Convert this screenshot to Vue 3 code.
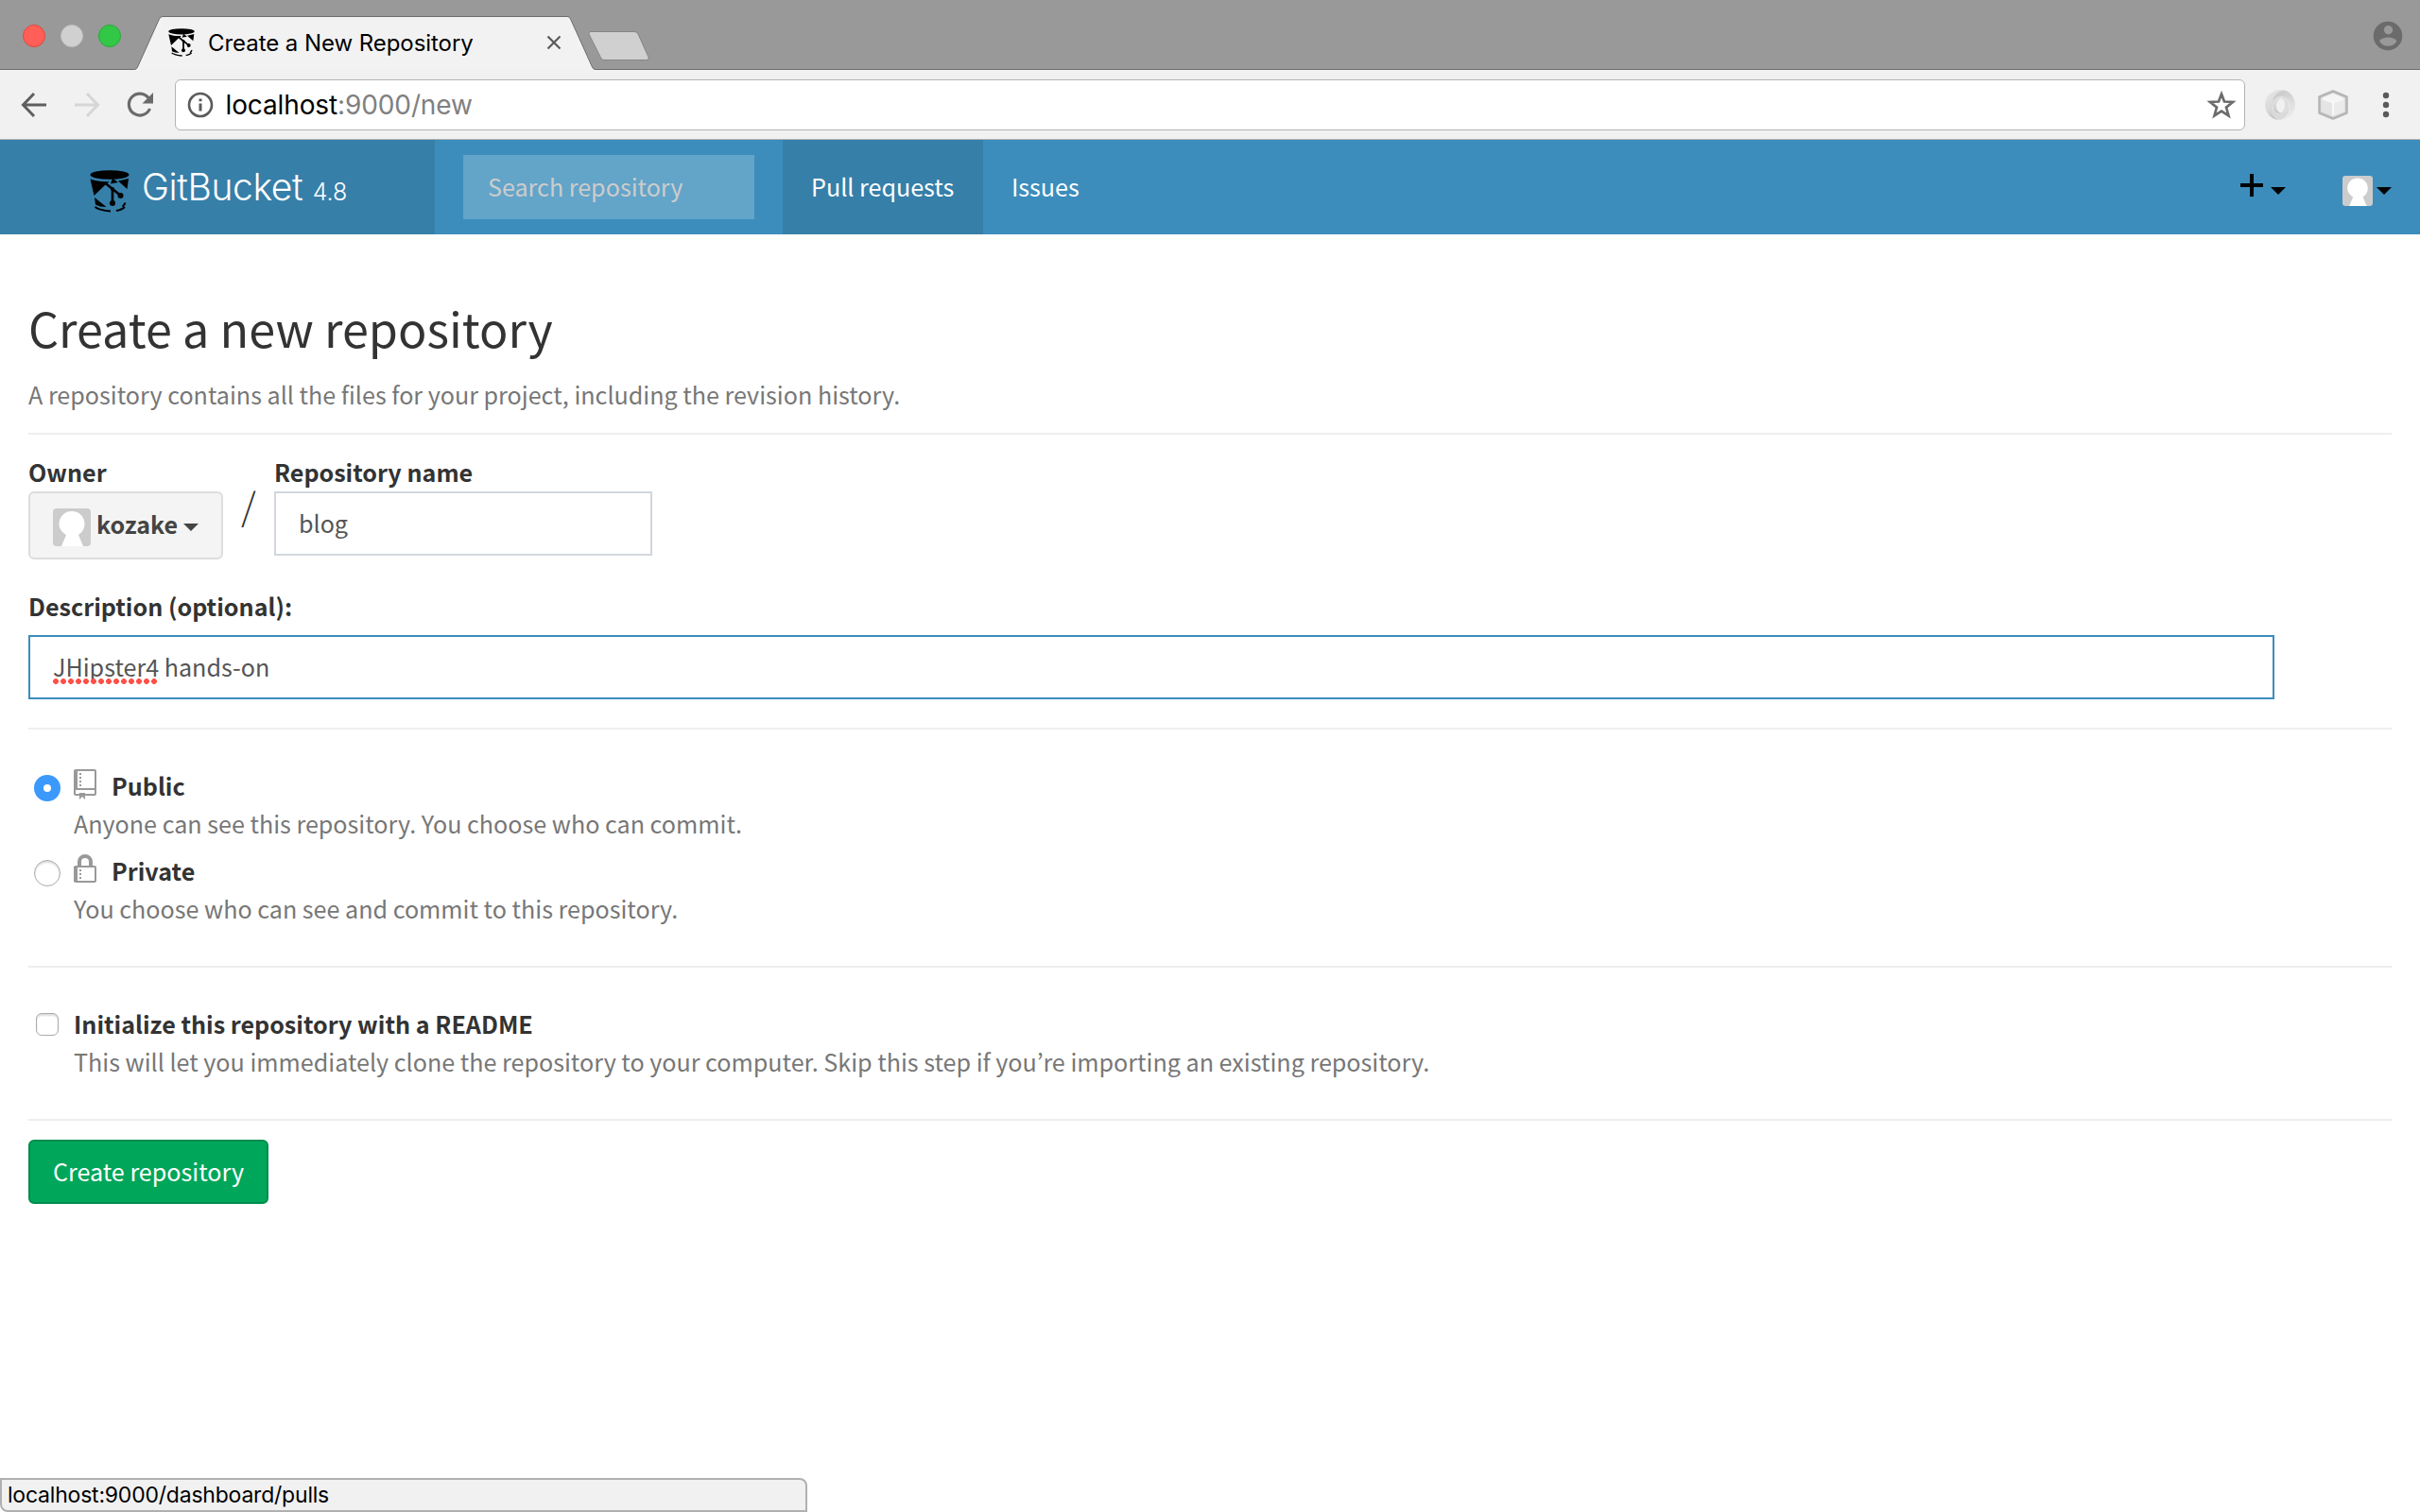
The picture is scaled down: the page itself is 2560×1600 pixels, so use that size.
<script setup>
const radios = [
  { name: 'Public', note: 'Anyone can see this repository. You choose who can commit.', on: true },
  { name: 'Private', note: 'You choose who can see and commit to this repository.', on: false },
]
</script>

<template>
  <div class="window">
    <header class="strip">
      <svg class="strip-art" width="700" height="74" viewBox="0 0 700 74">
        <circle cx="36" cy="38" r="11.5" fill="#ff5f57" stroke="#e2463f" />
        <circle cx="76" cy="38" r="11.5" fill="#d0d0d0" stroke="#c0c0c0" />
        <circle cx="116" cy="38" r="11.5" fill="#33c748" stroke="#27aa35" />
        <path d="M0 73.5H142Q144.500 73.500 145.500 71L168.500 20Q170 17.500 172 17.500H600Q602.500 17.500 603.500 20L626.500 71Q627.500 73.500 630 73.500H700V76H0Z" fill="#f2f2f2" stroke="#6d6d6d" />
        <path d="M625 33.500H671Q674 33.500 675 36L686 60.500Q687 63.500 684 63.500H639Q636.500 63.500 635.500 61L623 36Q622 33.500 625 33.500Z" fill="#d0d0d0" stroke="#858585" />
      </svg>
      <div class="tab">
        <svg class="favicon" width="28" height="30" viewBox="0 0 42 45"><use href="#bucket" /></svg>
        <span class="tab-title">Create a New Repository</span>
        <svg class="close" width="16" height="16" viewBox="0 0 16 16"><path d="M1.500 1.500 14.500 14.500M14.500 1.500 1.500 14.500" stroke="#5a5a5a" stroke-width="2.200" fill="none" /></svg>
      </div>
      <svg class="profile" width="32" height="32" viewBox="0 0 32 32">
        <circle cx="16" cy="16" r="15.300" fill="#6b6b6b" /><circle cx="16.500" cy="9.800" r="4.700" fill="#999" />
        <path d="M7 21.500C9 18.500 13 17.500 16.300 17.500S23.500 18.500 25.600 21.500C23.500 25 20 26.800 16.300 26.800S9 25 7 21.500Z" fill="#999" />
      </svg>
    </header>

    <div class="toolbar">
      <svg width="144" height="32" viewBox="0 0 144 32" fill="none" stroke-width="3">
        <path d="M27 16H3M14 4 2.500 16 14 28" stroke="#5f5f5f" />
        <path d="M57 16H81M70 4 81.500 16 70 28" stroke="#d6d6d6" />
        <path d="M135 8.500A11.500 11.500 0 1 0 136.500 20" stroke="#6b6b6b" stroke-width="3.200" />
        <path d="M140 3V14.500H128.500Z" fill="#6b6b6b" />
      </svg>
      <div class="omnibox">
        <svg width="28" height="28" viewBox="0 0 28 28"><circle cx="14" cy="14" r="12" fill="none" stroke="#5a5a5a" stroke-width="2.600" /><path d="M14 12.500V20.500M14 7.500V10.300" stroke="#5a5a5a" stroke-width="3" /></svg>
        <span class="url">localhost<span class="muted">:9000/new</span></span>
        <svg class="star" width="32" height="32" viewBox="0 0 32 32"><path d="M16 4.500 19 12.500 28 13 21 18.600 23.500 27.500 16 22.600 8.500 27.500 11 18.600 4 13 13 12.500Z" fill="none" stroke="#6b6b6b" stroke-width="2.700" /></svg>
      </div>
      <div class="extensions">
        <svg width="32" height="32" viewBox="0 0 32 32">
          <defs>
            <linearGradient id="ring-left" x1="0" y1="0" x2="0.6" y2="1"><stop stop-color="#e9e9e9" /><stop offset=".6" stop-color="#d8d8d8" /><stop offset="1" stop-color="#bcbcbc" /></linearGradient>
            <linearGradient id="ring-right" x1="0.2" y1="0" x2="0.6" y2="1"><stop stop-color="#c6c6c6" /><stop offset=".5" stop-color="#dadada" /><stop offset="1" stop-color="#ececec" /></linearGradient>
          </defs>
          <path d="M18 0C7 0 0 7 0 16C0 24 6 31 14 32C8 28 6 22 8 17C10 11 14 8 20 8C15 9 12 12 12 17C12 22 15 25 20 25C14 27 8 24 8 17Z" fill="url(#ring-left)" />
          <path d="M8 17C8 11 13 7 19 8C25 9 27 15 24 21C22 25 17 26 14 24C17 26 21 22 21 16C21 11 18 8 15 9C10 10 8 13 8 17Z" fill="#dedede" />
          <path d="M18 0C27 1 32 8 32 16C32 25 25 32 15 32C20 31 25 27 26 20C27 14 25 9 19 7.500C13 6.500 9 10 8 15C8 9 11 4 16 2C18 1.500 20 1 18 0Z" fill="url(#ring-right)" />
          <path d="M13 24C18 27 24 23 26 17C26 25 21 31 15 32C9 30 6 25 7 18C8 21 10 23 13 24Z" fill="#dadada" />
        </svg>
        <svg width="32" height="32" viewBox="0 0 32 32">
          <path d="M16 1.500 30.500 7.500V24.500L16 30.500 1.500 24.500V7.500Z" fill="#dedede" stroke="#b5b5b5" stroke-width="2.500" stroke-linejoin="round" />
          <path d="M4 9.500 15.500 13.500V28L4 23Z" fill="#e4e4e4" /><path d="M16.500 13.500 28 9.500V23L16.500 28Z" fill="#ebebeb" /><path d="M16 4 27.500 8.500 16 12.500 4.500 8.500Z" fill="#f5f5f5" />
          <path d="M5 9.500 16 13.500 27 9.500M16 13.500V27" fill="none" stroke="#f8f8f8" stroke-width="2" />
        </svg>
        <svg class="dots" width="8" height="28" viewBox="0 0 8 28" fill="#5a5a5a"><circle cx="4" cy="4" r="3.200" /><circle cx="4" cy="14" r="3.200" /><circle cx="4" cy="24" r="3.200" /></svg>
      </div>
    </div>

    <nav class="nav">
      <div class="brand">
        <svg class="bucket" width="42" height="45" viewBox="0 0 42 45">
          <g id="bucket">
            <ellipse cx="21" cy="5" rx="20.500" ry="4.800" />
            <path d="M.5 9.500C7 12 15 12.500 21 12L17 15 4.500 27Z" />
            <path d="M30 11.500 41 9 39.500 20Z" />
            <path d="M5 29 17.500 39Q10 39 6 36.500Z" />
            <path d="M16 13.500 31.500 26M24 19V34" stroke="#000" stroke-width="2.600" fill="none" />
            <circle cx="32.500" cy="27" r="3" /><circle cx="24" cy="35" r="3" /><circle cx="24" cy="20" r="2" />
            <path d="M24 8.500 30 13 22 14.500Z" />
            <path d="M5.500 39Q10 42.500 22 43.500M28 43Q34 42 37 39M34.500 38.500Q37 36.500 37.500 34.500" stroke="#000" stroke-width="2" fill="none" />
          </g>
        </svg>
        <span class="brand-name">GitBucket</span>
        <span class="brand-version">4.8</span>
      </div>
      <div class="search">Search repository</div>
      <a class="link active">Pull requests</a>
      <a class="link">Issues</a>
      <div class="nav-right">
        <svg class="plus" width="24" height="24" viewBox="0 0 24 24"><path d="M0 12H24M12 0V24" stroke="#000" stroke-width="4" /></svg>
        <i class="caret" />
        <svg class="avatar" width="32" height="32" viewBox="0 0 40 40"><use href="#person" /></svg>
        <i class="caret" />
      </div>
    </nav>

    <main>
      <h1>Create a new repository</h1>
      <p class="lead">A repository contains all the files for your project, including the revision history.</p>
      <hr>
      <section class="names">
        <div class="owner">
          <label>Owner</label>
          <div class="owner-button">
            <svg width="40" height="40" viewBox="0 0 40 40"><g id="person"><rect width="40" height="40" rx="4" fill="#ccc" /><path d="M20 3C28 3 33.500 9 33.500 16.500C33.500 21 31.500 25 27 28L32 40H9L14 28C9 25 6.500 21 6.500 16.500C6.500 9 12 3 20 3Z" fill="#fff" /></g></svg>
            <b>kozake</b>
            <i class="caret" />
          </div>
        </div>
        <span class="slash">/</span>
        <div class="repo">
          <label>Repository name</label>
          <div class="field">blog</div>
        </div>
      </section>
      <section class="description">
        <label>Description (optional):</label>
        <div class="field focused"><span class="misspelt">JHipster4</span> hands-on</div>
      </section>
      <hr>
      <section class="choices">
        <div v-for="r in radios" :key="r.name" class="choice">
          <span class="radio" :class="{ on: r.on }" />
          <div>
            <div class="choice-title">
              <svg v-if="r.on" width="24" height="32" viewBox="0 0 24 32" fill="none" stroke="#999" stroke-width="2">
                <rect x="1" y="1" width="22" height="26" rx="1" /><path d="M2 2V21" stroke-width="4" /><path d="M1 21H23" /><path d="M7 4V19" stroke-dasharray="2 2" /><path d="M6 25H12V32L9 29 6 32Z" fill="#999" stroke="none" />
              </svg>
              <svg v-else width="24" height="32" viewBox="0 0 24 32" fill="none" stroke="#999" stroke-width="2">
                <rect x="1" y="13" width="22" height="16" rx="1" /><path d="M2 13V29" stroke-width="4" /><path d="M6 13V8A6 6 0 0 1 18 8V13" stroke-width="4" /><path d="M7 16V27" stroke-dasharray="2 2" />
              </svg>
              <b>{{ r.name }}</b>
            </div>
            <p>{{ r.note }}</p>
          </div>
        </div>
      </section>
      <hr>
      <section class="readme">
        <span class="checkbox" />
        <div>
          <b>Initialize this repository with a README</b>
          <p>This will let you immediately clone the repository to your computer. Skip this step if you’re importing an existing repository.</p>
        </div>
      </section>
      <hr>
      <div class="submit">Create repository</div>
    </main>
    <footer class="status">localhost:9000/dashboard/pulls</footer>
  </div>
</template>

<style>
body { margin: 0; background: #fff; }
</style>
<style scoped>
* { box-sizing: border-box; }
.window { position: relative; width: 2560px; height: 1600px; overflow: hidden; display: flex; flex-direction: column; background: #fff; color: #333; font: 25.120px/40px "Noto Sans CJK JP", "Open Sans", sans-serif; }
svg { display: block; flex: none; }
.strip { position: relative; height: 74px; flex: none; display: flex; background: #999; border-bottom: 1px solid #6d6d6d; }
.strip-art { position: absolute; left: 0; top: 0; }
.tab { position: relative; width: 594px; padding: 17px 0 0 178px; display: flex; align-items: center; font: 24px/32px Inter, sans-serif; color: #000; }
.tab-title { margin: 2px 0 0 14px; flex: 1; white-space: nowrap; letter-spacing: -.06px; }
.profile { margin: 22px 18px 0 auto; }
.toolbar { height: 74px; flex: none; display: flex; align-items: center; padding: 0 32px 0 22px; background: #f1f1f1; border-bottom: 1px solid #b0b0b0; }
.omnibox { height: 54px; flex: 1; margin-left: 19px; padding: 0 8px 0 12px; display: flex; align-items: center; background: #fff; border: 1px solid #b3b3b3; border-radius: 6px; font: 28px/40px Inter, sans-serif; color: #000; }
.url { margin-left: 12.500px; flex: 1; letter-spacing: -.12px; }
.muted { color: #808080; }
.extensions { display: flex; align-items: center; margin-left: 21px; gap: 24px; }
.dots { margin-left: 12px; }
.nav { height: 100px; flex: none; display: flex; align-items: center; background: #3c8dbc; color: #fff; }
.brand { width: 460px; height: 100px; padding-left: 95px; display: flex; align-items: baseline; background: #367fa9; font: 300 39px/100px Inter, sans-serif; }
.bucket { align-self: flex-start; margin-top: 32px; }
.brand-name { margin-left: 13px; letter-spacing: -.4px; }
.brand-version { margin-left: 10.500px; font-size: 25px; }
.search { width: 308px; height: 68px; margin: 0 30px; padding-left: 26px; line-height: 66px; background: #63a4c9; color: #ccc; }
.link { height: 100px; padding: 0 30px; line-height: 98px; }
.active { width: 212px; background: #367fa9; }
.nav-right { margin-left: auto; padding-right: 30px; display: flex; align-items: center; color: #000; }
.caret { width: 0; height: 0; border: 8px solid transparent; border-top-color: currentColor; border-bottom: 0; }
.nav-right .caret { margin: 8px 0 0 4px; }
.nav-right .plus { margin: -4px 4px 0 0; }
.nav-right .avatar { margin: 8px 0 0 60px; }
main { padding: 0 30px; display: flex; flex-direction: column; }
hr { width: 100%; height: 2px; margin: 0; border: 0; background: #eee; flex: none; }
h1 { margin: 68px 0 0; font: inherit; font-size: 50.300px; line-height: 60px; }
p { margin: 0; color: #777; white-space: nowrap; }
.lead { margin: 21px 0 21px; }
label, b { display: block; font-weight: 700; }
.names { display: flex; height: 172px; padding-top: 19px; }
label { margin-bottom: 1px; }
.owner { width: 206px; }
.owner-button { height: 72px; padding: 0 24px; display: flex; align-items: center; background: #f4f4f4; border: 2px solid #ddd; border-radius: 6px; color: #444; }
.owner-button svg { margin-top: 4px; }
.owner-button b { margin: -4px 0 0 6px; }
.owner-button .caret { margin: 3px 0 0 6px; }
.slash { width: 54px; padding-left: 19px; margin-top: 30px; font-size: 40px; line-height: 50px; font-weight: 300; }
.field { width: 400px; height: 68px; padding-left: 24px; border: 2px solid #d2d6de; line-height: 62px; color: #555; }
.description { height: 138px; }
.description label { margin-bottom: 11px; margin-top: -11px; }
.focused { width: 2376px; border-color: #3c8dbc; }
.misspelt { position: relative; }
.misspelt::after { content: ""; position: absolute; left: 0; bottom: -1px; width: 112px; height: 6px; background: radial-gradient(circle at 3px 3px, #ff5047 2.600px, transparent 3.200px) 0 0 / 8px 6px; }
.choices { height: 250px; padding-top: 39px; }
.choice { height: 90px; display: flex; }
.radio { width: 28px; height: 28px; margin: 9px 14px 0 6px; border-radius: 50%; border: 1.500px solid #aaa; box-shadow: inset 0 2px 2px #ddd; }
.radio.on { border: 10px solid #3b99fc; box-shadow: none; }
.choice-title { display: flex; gap: 16px; }
.choice-title svg { margin-top: 3px; }
.readme { display: flex; height: 160px; padding-top: 39px; }
.checkbox { width: 24px; height: 24px; margin: 9px 16px 0 8px; border: 1.500px solid #aaa; border-radius: 6px; box-shadow: inset 0 2px 2px #ddd; }
.submit { width: 254px; height: 68px; margin-top: 20px; padding-left: 24px; line-height: 62px; background: #00a65a; border: 2px solid #008d4c; border-radius: 6px; color: #fff; }
.status { position: absolute; left: 0; bottom: 0; width: 854px; height: 36px; padding-left: 6px; border: 2px solid #b0b0b0; border-radius: 0 8px 0 8px; background: #f1f1f1; color: #000; font: 23px/32px Inter, sans-serif; letter-spacing: -.21px; }
</style>
